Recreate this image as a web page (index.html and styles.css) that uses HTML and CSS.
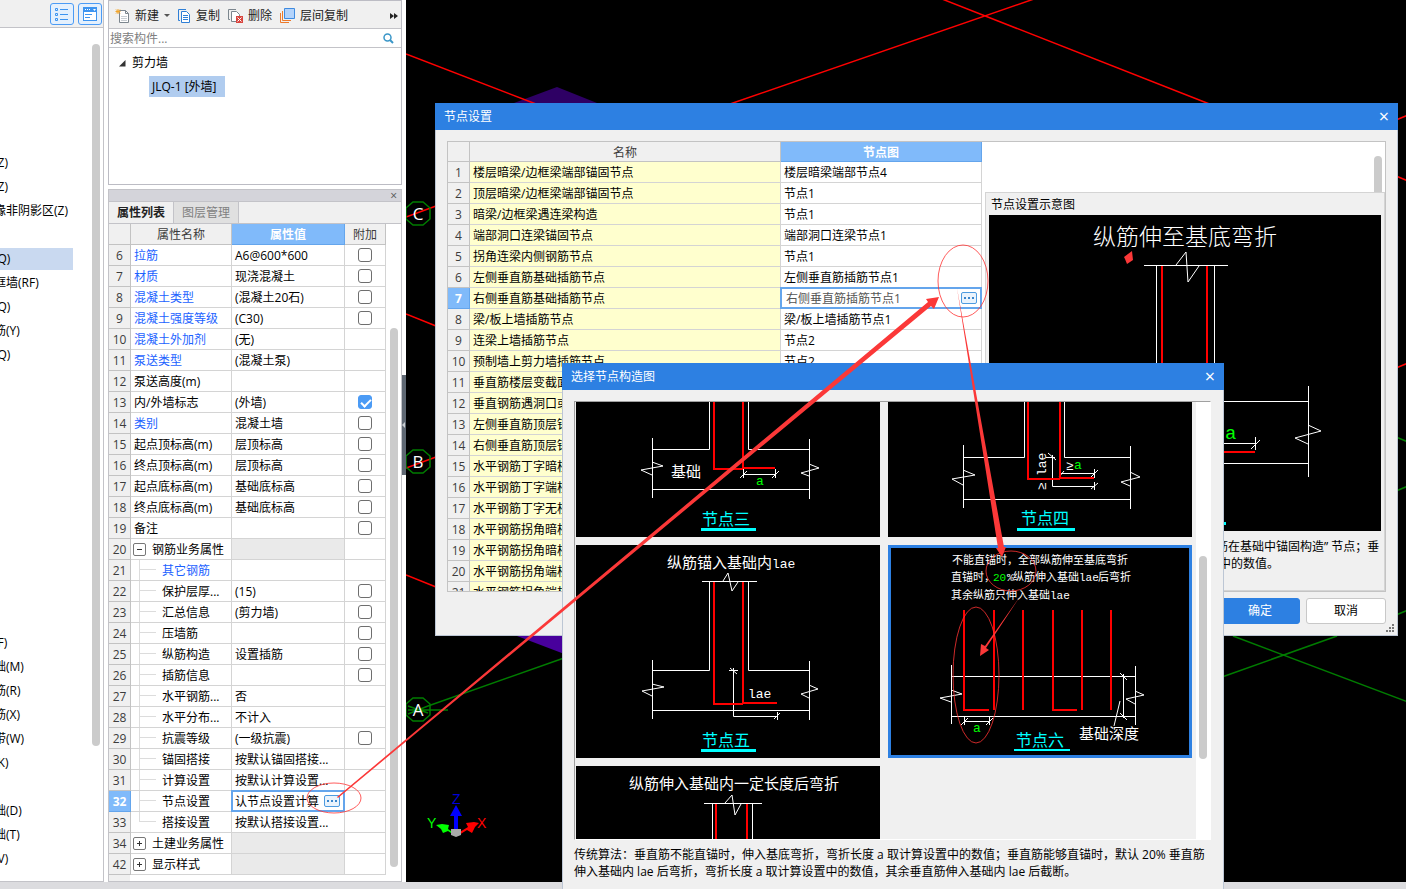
FILE: index.html
```html
<!DOCTYPE html>
<html lang="zh-CN">
<head>
  <meta charset="UTF-8">
  <meta name="viewport" content="width=device-width, initial-scale=1.0">
  <title>节点设置</title>
  <link rel="stylesheet" href="styles.css">
</head>
<body>

  <div class="workspace">

    <!-- Navigation tree -->
    <nav class="nav">
      <div class="nav-bar">
        <button class="view-btn" aria-label="列表">
          <svg width="14" height="14" viewBox="0 0 14 14" fill="none" stroke="#3d94f0">
            <path d="M.5 1.500h2v2h-2zM.5 6.500h2v2h-2zM.5 11.500h2v2h-2zM5 2.500h8M5 7.500h8M5 12.500h8"/>
          </svg>
        </button>
        <button class="view-btn" aria-label="窗口">
          <svg width="16" height="14" viewBox="0 0 16 14">
            <path d="M1 0h14v14H1z" fill="#3d94f0"/>
            <path d="M2 5h12v8H2zM3 2h1v1H3zM5 2h1v1H5zM7 2h1v1H7zM11 2h3l-1.500 2z" fill="#fff"/>
            <path d="M3 7.500h7M3 10.500h5" stroke="#3d94f0"/>
          </svg>
        </button>
      </div>
      <div class="nav-body">
        <ul class="nav-list">
          <li>构造柱(Z)</li>
          <li>砌体柱(Z)</li>
          <li>约束边缘非阴影区(Z)</li>
          <li></li>
          <li class="current">剪力墙(Q)</li>
          <li>人防门框墙(RF)</li>
          <li>砌体墙(Q)</li>
          <li>砌体加筋(Y)</li>
          <li>保温墙(Q)</li>
        </ul>
        <ul class="nav-list">
          <li>基础梁(F)</li>
          <li>筏板基础(M)</li>
          <li>筏板主筋(R)</li>
          <li>筏板负筋(X)</li>
          <li>基础板带(W)</li>
          <li>集水坑(K)</li>
          <li></li>
          <li>独立基础(D)</li>
          <li>条形基础(T)</li>
          <li>桩承台(V)</li>
        </ul>
        <div class="thumb nav-thumb"></div>
      </div>
    </nav>

    <!-- Component list and properties -->
    <aside class="side">
      <section class="components">
        <div class="toolbar">
          <button>
            <svg width="15" height="16" viewBox="0 0 15 16" fill="none">
              <path d="M4.500 2.500h6l3 3v9h-9z" fill="#fff" stroke="#7c868e"/>
              <path d="M10.500 2.500v3h3" stroke="#7c868e"/>
              <path d="M6 8.500h6M6 10.500h6M6 12.500h6" stroke="#c8cdd2"/>
              <path d="M3 1v5M.5 3.500h5M1 1.500l4 4M5 1.500l-4 4" stroke="#f2a52b"/>
            </svg>
            新建<i class="caret"></i>
          </button>
          <button>
            <svg width="13" height="16" viewBox="0 0 13 16" fill="none">
              <path d="M8 1.500H.5v11H2" stroke="#2f7fd6"/>
              <path d="M3.500 3.500h5l3 3v8h-8z" fill="#fff" stroke="#2f7fd6"/>
              <path d="M5 7.500h5M5 9.500h5M5 11.500h5" stroke="#2f7fd6"/>
            </svg>
            复制
          </button>
          <button>
            <svg width="15" height="16" viewBox="0 0 15 16" fill="none">
              <path d="M8 1.500H.5v10H2" stroke="#7c868e"/>
              <path d="M3.500 3.500h5l3 3v7h-8z" fill="#fff" stroke="#7c868e"/>
              <path d="M8 8h7v7H8z" fill="#d9453f"/>
              <path d="M9.500 9.500l4 4M13.500 9.500l-4 4" stroke="#fff"/>
            </svg>
            删除
          </button>
          <button>
            <svg width="15" height="16" viewBox="0 0 15 16" fill="none">
              <path d="M.5 5v9.500H9M2.500 3v9.500H11" stroke="#ec7a2c"/>
              <path d="M4.500.5h10v10h-10z" fill="#b3d3fb" stroke="#3f8be0"/>
            </svg>
            层间复制
          </button>
          <svg class="more" width="8" height="6" viewBox="0 0 8 6"><path d="M0 0l4 3-4 3zM4 0l4 3-4 3z" fill="#222"/></svg>
        </div>
        <div class="search">
          <input type="text" placeholder="搜索构件..." aria-label="搜索构件">
          <svg width="11" height="11" viewBox="0 0 11 11" fill="none" stroke="#3a96c8">
            <circle cx="4.500" cy="4.500" r="3.500" stroke-width="1.500"/>
            <path d="M7 7l3 3" stroke-width="2"/>
          </svg>
        </div>
        <div class="tree">
          <div class="tree-root"><svg width="7" height="7" viewBox="0 0 7 7"><path d="M6.500 0v6.500H0z" fill="#333"/></svg>剪力墙</div>
          <div class="tree-leaf">JLQ-1 [外墙]</div>
        </div>
      </section>

      <section class="props">
        <div class="props-strip"><button class="close-sm" aria-label="关闭">×</button></div>
        <div class="tabs">
          <button class="tab active">属性列表</button>
          <button class="tab">图层管理</button>
        </div>
        <div class="props-body">
          <table class="grid props-grid">
            <colgroup><col class="c-num"><col class="c-name"><col class="c-value"><col class="c-extra"></colgroup>
            <thead>
              <tr><th></th><th>属性名称</th><th class="active">属性值</th><th>附加</th></tr>
            </thead>
            <tbody>
              <tr><th>6</th><td class="link">拉筋</td><td>A6@600*600</td><td><input type="checkbox" aria-label="拉筋"></td></tr>
              <tr><th>7</th><td class="link">材质</td><td>现浇混凝土</td><td><input type="checkbox" aria-label="材质"></td></tr>
              <tr><th>8</th><td class="link">混凝土类型</td><td>(混凝土20石)</td><td><input type="checkbox" aria-label="混凝土类型"></td></tr>
              <tr><th>9</th><td class="link">混凝土强度等级</td><td>(C30)</td><td><input type="checkbox" aria-label="混凝土强度等级"></td></tr>
              <tr><th>10</th><td class="link">混凝土外加剂</td><td>(无)</td><td></td></tr>
              <tr><th>11</th><td class="link">泵送类型</td><td>(混凝土泵)</td><td></td></tr>
              <tr><th>12</th><td>泵送高度(m)</td><td></td><td></td></tr>
              <tr><th>13</th><td>内/外墙标志</td><td>(外墙)</td><td><input type="checkbox" aria-label="内/外墙标志" checked></td></tr>
              <tr><th>14</th><td class="link">类别</td><td>混凝土墙</td><td><input type="checkbox" aria-label="类别"></td></tr>
              <tr><th>15</th><td>起点顶标高(m)</td><td>层顶标高</td><td><input type="checkbox" aria-label="起点顶标高"></td></tr>
              <tr><th>16</th><td>终点顶标高(m)</td><td>层顶标高</td><td><input type="checkbox" aria-label="终点顶标高"></td></tr>
              <tr><th>17</th><td>起点底标高(m)</td><td>基础底标高</td><td><input type="checkbox" aria-label="起点底标高"></td></tr>
              <tr><th>18</th><td>终点底标高(m)</td><td>基础底标高</td><td><input type="checkbox" aria-label="终点底标高"></td></tr>
              <tr><th>19</th><td>备注</td><td></td><td><input type="checkbox" aria-label="备注"></td></tr>
              <tr><th>20</th><td><button class="fold" aria-label="收起"></button>钢筋业务属性</td><td class="off"></td><td></td></tr>
              <tr><th>21</th><td class="child link">其它钢筋</td><td></td><td></td></tr>
              <tr><th>22</th><td class="child">保护层厚...</td><td>(15)</td><td><input type="checkbox" aria-label="保护层厚度"></td></tr>
              <tr><th>23</th><td class="child">汇总信息</td><td>(剪力墙)</td><td><input type="checkbox" aria-label="汇总信息"></td></tr>
              <tr><th>24</th><td class="child">压墙筋</td><td></td><td><input type="checkbox" aria-label="压墙筋"></td></tr>
              <tr><th>25</th><td class="child">纵筋构造</td><td>设置插筋</td><td><input type="checkbox" aria-label="纵筋构造"></td></tr>
              <tr><th>26</th><td class="child">插筋信息</td><td></td><td><input type="checkbox" aria-label="插筋信息"></td></tr>
              <tr><th>27</th><td class="child">水平钢筋...</td><td>否</td><td></td></tr>
              <tr><th>28</th><td class="child">水平分布...</td><td>不计入</td><td></td></tr>
              <tr><th>29</th><td class="child">抗震等级</td><td>(一级抗震)</td><td><input type="checkbox" aria-label="抗震等级"></td></tr>
              <tr><th>30</th><td class="child">锚固搭接</td><td>按默认锚固搭接...</td><td></td></tr>
              <tr><th>31</th><td class="child">计算设置</td><td>按默认计算设置...</td><td></td></tr>
              <tr><th class="active">32</th><td class="child">节点设置</td><td class="edit"><div class="editor"><input type="text" value="认节点设置计算" aria-label="节点设置"><button class="dots" aria-label="更多"></button></div></td><td></td></tr>
              <tr><th>33</th><td class="child last">搭接设置</td><td>按默认搭接设置...</td><td></td></tr>
              <tr><th>34</th><td><button class="fold plus" aria-label="展开"></button>土建业务属性</td><td class="off"></td><td></td></tr>
              <tr><th>42</th><td><button class="fold plus" aria-label="展开"></button>显示样式</td><td class="off"></td><td></td></tr>
            </tbody>
          </table>
          <div class="thumb props-thumb"></div>
        </div>
      </section>
    </aside>

    <!-- Model view -->
    <main class="scene">
      <button class="splitter" aria-label="收起面板"></button>
      <svg class="scene-lines" width="100%" height="100%">
        <g transform="translate(-406 0)" fill="none" stroke-width="1.500">
          <path d="M514 103l43-16 40 16z" fill="#2e0064"/>
          <path d="M517 636l50 19v-19z" fill="#48009c"/>
          <g stroke="#f00">
            <path d="M406 54l130 50M730 104L1034-1M942-1l270 106M1396 120l12-5M1396 176l12 5M1396 368l12-5"/>
            <path d="M406 217l30-11M406 314l30 12M406 468l30-11M406 575l30 12"/>
          </g>
          <g stroke="#007c00">
            <path d="M1396 437l12 5M1396 491l12-5M1396 615l12-5M1233 636l175 66M1337 636l-115 41"/>
            <path d="M408 714l20-8 136-48M408 710h40M408 706l20 7"/>
            <path d="M413 202h10l7 6v11l-7 6h-10l-7-6v-11zM413 450h10l7 6v11l-7 6h-10l-7-6v-11zM413 698h10l7 6v11l-7 6h-10l-7-6v-11z"/>
          </g>
        </g>
        <g class="axis-name">
          <text x="12" y="220">C</text>
          <text x="12" y="468">B</text>
          <text x="12" y="716">A</text>
        </g>
        <g class="gizmo">
          <path d="M48 811h4v18h-4zM50 805l6 11H44z" fill="#00f"/>
          <path d="M52 833l10-6-2-4 8-1 5 1-4 4-3 6-5-3-8 5z" fill="#f00"/>
          <path d="M48 833l-6-4 1-4-7-1-6 1 5 4 2 4 5-2 6 4z" fill="#0f0"/>
          <path d="M45 829h10v6l-5 2-5-2z" fill="#aaa"/>
          <text x="46" y="804" fill="#0000d8">Z</text>
          <text x="21" y="828" fill="#0f0">Y</text>
          <text x="71" y="828" fill="#f00">X</text>
        </g>
      </svg>
    </main>
  </div>

  <footer class="status"></footer>

  <!-- Node settings dialog -->
  <div class="dialog node-dialog" role="dialog" aria-label="节点设置">
    <div class="dialog-title">节点设置<button class="close" aria-label="关闭">×</button></div>
    <div class="node-frame">
      <table class="grid node-grid">
        <colgroup><col class="c-num"><col class="c-node"><col class="c-figure"></colgroup>
        <thead>
          <tr><th></th><th>名称</th><th class="active">节点图</th></tr>
        </thead>
        <tbody>
          <tr><th>1</th><td>楼层暗梁/边框梁端部锚固节点</td><td>楼层暗梁端部节点4</td></tr>
          <tr><th>2</th><td>顶层暗梁/边框梁端部锚固节点</td><td>节点1</td></tr>
          <tr><th>3</th><td>暗梁/边框梁遇连梁构造</td><td>节点1</td></tr>
          <tr><th>4</th><td>端部洞口连梁锚固节点</td><td>端部洞口连梁节点1</td></tr>
          <tr><th>5</th><td>拐角连梁内侧钢筋节点</td><td>节点1</td></tr>
          <tr><th>6</th><td>左侧垂直筋基础插筋节点</td><td>左侧垂直筋插筋节点1</td></tr>
          <tr><th class="active">7</th><td>右侧垂直筋基础插筋节点</td><td class="edit"><div class="editor"><input type="text" value="右侧垂直筋插筋节点1" aria-label="节点图"><button class="dots" aria-label="更多"></button></div></td></tr>
          <tr><th>8</th><td>梁/板上墙插筋节点</td><td>梁/板上墙插筋节点1</td></tr>
          <tr><th>9</th><td>连梁上墙插筋节点</td><td>节点2</td></tr>
          <tr><th>10</th><td>预制墙上剪力墙插筋节点</td><td>节点2</td></tr>
          <tr><th>11</th><td>垂直筋楼层变截面锚固节点</td><td></td></tr>
          <tr><th>12</th><td>垂直钢筋遇洞口或端部节点</td><td></td></tr>
          <tr><th>13</th><td>左侧垂直筋顶层锚固节点</td><td></td></tr>
          <tr><th>14</th><td>右侧垂直筋顶层锚固节点</td><td></td></tr>
          <tr><th>15</th><td>水平钢筋丁字暗柱节点</td><td></td></tr>
          <tr><th>16</th><td>水平钢筋丁字端柱节点</td><td></td></tr>
          <tr><th>17</th><td>水平钢筋丁字无柱节点</td><td></td></tr>
          <tr><th>18</th><td>水平钢筋拐角暗柱外侧节点</td><td></td></tr>
          <tr><th>19</th><td>水平钢筋拐角暗柱内侧节点</td><td></td></tr>
          <tr><th>20</th><td>水平钢筋拐角端柱外侧节点</td><td></td></tr>
          <tr><th>21</th><td>水平钢筋拐角端柱内侧节点</td><td></td></tr>
        </tbody>
      </table>
      <div class="node-side">
        <div class="node-side-top"><div class="thumb"></div></div>
        <div class="preview">
          <div class="preview-title">节点设置示意图</div>
          <svg class="cad" viewBox="989 215 392 316">
            <text x="1093" y="245" class="t-xl">纵筋伸至基底弯折</text>
            <path class="w" d="M1144 265.500h84M1156.500 265v136M1214.500 265v136.500h94M1308.500 386v91M1156 463.500h152M1170 443.500h85.500M1255.500 437v13M1251 449l9-9"/>
            <path class="w" d="M1176 265l10-13 2 30 11-16M1308 425l13 6-26 7 13 6"/>
            <path class="r" d="M1162 266v186M1207 266v186h48"/>
            <text x="1225" y="439" class="t-lg g">a</text>
            <path class="u" d="M1170 523.500h56"/>
          </svg>
          <p class="preview-note">采用标准图集16G101-3中“墙身竖向分布钢筋在基础中锚固构造” 节点；垂<br>直筋伸至基底弯折，弯折长度 a 取计算设置中的数值。</p>
        </div>
      </div>
    </div>
    <div class="actions">
      <button class="btn primary">确定</button>
      <button class="btn">取消</button>
    </div>
    <svg class="grip" width="8" height="8" viewBox="0 0 8 8" fill="#777"><path d="M6 0h2v2H6zM3 3h2v2H3zM6 3h2v2H6zM0 6h2v2H0zM3 6h2v2H3zM6 6h2v2H6z"/></svg>
  </div>

  <!-- Node figure picker -->
  <div class="dialog pick-dialog" role="dialog" aria-label="选择节点构造图">
    <div class="dialog-title">选择节点构造图<button class="close" aria-label="关闭">×</button></div>
    <div class="gallery">
      <div class="cards">
        <svg class="cad" viewBox="576 402 304 135">
          <path class="w" d="M709.500 402v47.500h-57M748.500 402v47.500h61M652.500 438v60M809.500 439v60M652 489.500h157"/>
          <path class="w" d="M652 462l11 4-22 4 11 5M809 464l10 4-18 5 8 3M743 474.500h33M743.500 469v9M775.500 469v9M740 478l7-7M772 478l7-7"/>
          <path class="r" d="M714 402v67h29M743 402v66h32"/>
          <text x="671" y="477" class="t-md">基础</text>
          <text x="756" y="485" class="t-sm g">a</text>
          <text x="702" y="525" class="t-name">节点三</text>
          <path class="u" d="M701 529.500h55"/>
        </svg>
        <svg class="cad" viewBox="888 402 304 135">
          <path class="w" d="M1024.500 402v55.500h-61M1064.500 402v55.500h66M963.500 445v63M1130.500 446v63M963 499.500h167"/>
          <path class="w" d="M963 470l12 5-23 4 11 6M1130 472l10 5-19 5 9 4M1052.500 455v31.500h42M1046 457.500h9M1048 453l8 7M1060 473.500h34.500M1094.500 469v9M1094.500 482v8M1059 477l5-6M1091 477l7-7M1091 489l7-6"/>
          <path class="r" d="M1028 402v77h32M1060 402v76h34"/>
          <text transform="rotate(-90 1046 476)" x="1046" y="476" class="t-sm">lae</text>
          <text transform="rotate(-90 1046 490)" x="1046" y="490" class="t-sm">≥</text>
          <text x="1066" y="470" class="t-sm">≥<tspan x="1074" y="469" class="g">a</tspan></text>
          <text x="1021" y="524" class="t-name">节点四</text>
          <path class="u" d="M1017 529.500h58"/>
        </svg>
        <svg class="cad" viewBox="576 545 304 213">
          <text x="667" y="568" class="t-md">纵筋锚入基础内<tspan class="t-sm">lae</tspan></text>
          <path class="w" d="M702 581.500h55M709.500 582v88.500h-57M748.500 582v88.500h61M652.500 660v59M809.500 661v59M652 710.500h157"/>
          <path class="w" d="M723 581l5-8 4 18 6-9M652 684l12 3-22 4 10 5M809 685l9 4-17 5 8 4M733.500 668v48.500h44M729 670.500h9M730 668l7 6M777.500 712v8M774 719l6-6"/>
          <path class="r" d="M714 582v122h29M743 582v121h34"/>
          <text x="748" y="698" class="t-sm">lae</text>
          <text x="702" y="746" class="t-name">节点五</text>
          <path class="u" d="M701 750.500h55"/>
        </svg>
        <svg class="cad selected" viewBox="888 545 304 213">
          <g class="t-xs">
            <text x="952" y="564">不能直锚时，全部纵筋伸至基底弯折</text>
            <text x="951" y="581">直锚时，<tspan x="993" class="g">20</tspan><tspan x="1007">%</tspan><tspan x="1013">纵筋伸入基础</tspan><tspan x="1079">lae</tspan><tspan x="1098">后弯折</tspan></text>
            <text x="951" y="599">其余纵筋只伸入基础lae</text>
          </g>
          <path class="w" d="M951 676.500h184M951 716.500h184M951.500 665v59M1135.500 666v59M1123.500 674v44M1120 673l7 7M1120 713l7 7M1120 701l-6 25"/>
          <path class="w" d="M951 690l11 4-22 4 11 4M1135 691l9 4-18 4 9 5M964 721.500h25M964.500 717v8M989.500 717v8M961 725l7-7M986 725l7-7"/>
          <path class="r" d="M964 610v100h25M994 610v100M1023 610v100M1053 610v100h24M1082 610v100M1111 610v100"/>
          <text x="973" y="732" class="t-sm g">a</text>
          <text x="1079" y="739" class="t-md">基础深度</text>
          <text x="1016" y="746" class="t-name">节点六</text>
          <path class="u thin" d="M1014 750h56"/>
        </svg>
        <svg class="cad" viewBox="576 766 304 73">
          <text x="629" y="789" class="t-md">纵筋伸入基础内一定长度后弯折</text>
          <path class="w" d="M704 803.500h58M712.500 804v35M752.500 804v35M725 803l7-8 3 20 6-11"/>
          <path class="r" d="M716 804v35M747 804v35"/>
        </svg>
      </div>
      <div class="track"><div class="thumb"></div></div>
    </div>
    <p class="pick-note">传统算法：垂直筋不能直锚时，伸入基底弯折，弯折长度 a 取计算设置中的数值；垂直筋能够直锚时，默认 20% 垂直筋<br>伸入基础内 lae 后弯折，弯折长度 a 取计算设置中的数值，其余垂直筋伸入基础内 lae 后截断。</p>
  </div>

  <!-- Review marks drawn over the windows -->
  <svg class="marks" width="100%" height="100%">
    <g fill="none" stroke="#f33" stroke-opacity=".8">
      <ellipse cx="334" cy="798" rx="27" ry="15"/>
      <ellipse cx="963" cy="281" rx="25" ry="36"/>
      <ellipse cx="1011" cy="571" rx="25" ry="20"/>
      <ellipse cx="976" cy="675" rx="23" ry="68"/>
    </g>
    <g fill="#fb3838">
      <path d="M337 797L928 302l-2-3 13-2-5 12-3-3L338 798z"/>
      <path d="M957 288l41 260-2 0 6 9 4-10-2 0z"/>
      <path d="M1021 595l-36 51-4-2-1 12 9-6-3-2z"/>
      <path d="M1124 257l8-6 1 9-3 2-3 2-2-5z"/>
    </g>
  </svg>

</body>
</html>
```
FILE: styles.css
```css
* {
  margin: 0;
  padding: 0;
  box-sizing: border-box;
}

body {
  height: 100vh;
  display: flex;
  flex-direction: column;
  position: relative;
  overflow: hidden;
  background: #fff;
  color: #000;
  font-family: "Open Sans", "Noto Sans CJK SC", sans-serif;
  font-size: 12px;
  line-height: 20px;
}

button, input {
  font: inherit;
  color: inherit;
  border: none;
  background: none;
  outline: none;
}

ul {
  list-style: none;
}

.workspace {
  flex: 1;
  min-height: 0;
  display: flex;
  gap: 4px;
}

.status {
  height: 7px;
  background: #dcdcdf;
}

.thumb {
  width: 8px;
  border-radius: 4px;
  background: #cbcbcb;
}

/* navigation */
.nav {
  width: 104px;
  display: flex;
  flex-direction: column;
  border-right: 1px solid #c3c3c8;
  border-bottom: 1px solid #c3c3c8;
}

.nav-bar {
  height: 28px;
  display: flex;
  justify-content: flex-end;
  align-items: center;
  gap: 4px;
  padding-right: 1px;
  background: #f0f0f0;
  border-bottom: 1px solid #c3c3c8;
}

.view-btn {
  width: 24px;
  height: 22px;
  display: flex;
  align-items: center;
  justify-content: center;
  border: 1px solid #4b9bf5;
  border-radius: 3px;
  background: #e4f0fd;
}

.nav-body {
  flex: 1;
  min-height: 0;
  position: relative;
  display: flex;
  flex-direction: column;
  gap: 264px;
  padding-top: 123px;
  overflow: hidden;
}

.nav-list li {
  width: 73px;
  height: 24px;
  line-height: 24px;
  text-indent: -42px;
  white-space: nowrap;
}

.nav-list .current {
  background: #c9d9f0;
  background-clip: content-box;
  padding: 1px 0;
  line-height: 22px;
}

.nav-thumb {
  position: absolute;
  top: 16px;
  right: 3px;
  bottom: 135px;
}

/* component panel */
.side {
  width: 294px;
  display: flex;
  flex-direction: column;
  gap: 4px;
}

.components {
  height: 185px;
  display: flex;
  flex-direction: column;
  border: 1px solid #bcbcc4;
}

.toolbar {
  height: 28px;
  display: flex;
  align-items: center;
  gap: 8px;
  padding: 2px 3px 0 6px;
  background: #f0f0f0;
  border-bottom: 1px solid #c3c3c8;
  color: #222;
}

.toolbar button {
  display: flex;
  align-items: center;
  gap: 5px;
}

.caret {
  border: 3px solid transparent;
  border-top-color: #555;
  border-bottom: none;
}

.more {
  margin-left: auto;
}

.search {
  height: 19px;
  display: flex;
  align-items: center;
  padding: 0 7px 0 1px;
  border-bottom: 1px solid #c3c3c8;
}

.search input {
  flex: 1;
  height: 18px;
  padding-top: 2px;
}

.search input::placeholder {
  color: #808080;
}

.tree {
  flex: 1;
  padding: 3px 0 0 10px;
  line-height: 24px;
}

.tree-root {
  display: flex;
  align-items: center;
  gap: 6px;
}

.tree-leaf {
  width: 76px;
  margin: 1px 0 0 30px;
  padding-left: 3px;
  line-height: 21px;
  white-space: nowrap;
  background: #b0ccef;
}

/* properties */
.props {
  flex: 1;
  min-height: 0;
  display: flex;
  flex-direction: column;
  border: 1px solid #c3c3c8;
}

.props-strip {
  height: 12px;
  display: flex;
  justify-content: flex-end;
  padding-right: 4px;
  background: #d4d4da;
  border-bottom: 1px solid #c3c3c8;
}

.close-sm {
  line-height: 11px;
  color: #555;
}

.tabs {
  height: 22px;
  display: flex;
  background: #f0f0f0;
  border-bottom: 1px solid #c3c3c8;
}

.tab {
  width: 65px;
  border-right: 1px solid #c3c3c8;
  background: #e0e0e0;
  color: #808080;
  line-height: 20px;
}

.tab.active {
  background: #f0f0f0;
  color: #222;
  font-weight: bold;
}

.props-body {
  flex: 1;
  min-height: 0;
  position: relative;
  background: linear-gradient(to right, #f0f0f0 21px, #fff 21px);
}

.props-thumb {
  position: absolute;
  top: 104px;
  right: 3px;
  bottom: 14px;
}

/* tables */
.grid {
  table-layout: fixed;
  border-collapse: separate;
  border-spacing: 0;
}

.grid th, .grid td {
  height: 21px;
  padding-top: 2px;
  border-right: 1px solid #d4d4d4;
  border-bottom: 1px solid #d4d4d4;
  line-height: 18px;
  white-space: nowrap;
  overflow: hidden;
}

.grid th {
  background: #f0f0f0;
  border-color: #c3c3c3;
  font-weight: normal;
  color: #3c3c3c;
  text-align: center;
}

.grid th.active {
  background: #80bafa;
  border-color: #64a5ec;
  color: #fff;
  font-weight: bold;
}

.grid td {
  padding-left: 3px;
  background: #fff;
}

.grid .link {
  color: #1c62ff;
}

.grid .off {
  background: #eaeaea;
}

.props-grid {
  width: 277px;
}

.c-num { width: 22px; }
.c-name { width: 101px; }
.c-value { width: 113px; }
.c-extra { width: 41px; }
.c-node { width: 311px; }
.c-figure { width: 201px; }

.props-grid td:last-child {
  padding: 0;
  text-align: center;
  line-height: 0;
}

.props-grid input[type="checkbox"] {
  appearance: none;
  width: 14px;
  height: 14px;
  border: 1px solid #6e6e6e;
  border-radius: 3px;
  vertical-align: middle;
}

.props-grid input[type="checkbox"]:checked {
  border-color: #4b9bf5;
  background: #4b9bf5;
}

.props-grid input[type="checkbox"]:checked::after {
  content: "";
  display: block;
  width: 8px;
  height: 4px;
  margin: 3px 2px;
  border: solid #fff;
  border-width: 0 0 2px 2px;
  transform: rotate(-45deg);
}

.fold {
  position: relative;
  width: 13px;
  height: 13px;
  margin: 0 6px 0 -1px;
  border: 1px solid #777;
  border-radius: 2px;
  vertical-align: -1px;
}

.fold::before, .fold.plus::after {
  content: "";
  position: absolute;
  top: 5px;
  left: 3px;
  width: 5px;
  height: 1px;
  background: #333;
}

.fold.plus::after {
  transform: rotate(90deg);
}

.grid td.child {
  position: relative;
  padding-left: 31px;
}

.child::before, .child::after {
  content: "";
  position: absolute;
  left: 8px;
  background: #dcdcdc;
}

.child::before {
  top: 0;
  bottom: 0;
  width: 1px;
}

.child.last::before {
  bottom: 10px;
}

.child::after {
  top: 9px;
  width: 17px;
  height: 1px;
}

.grid td.edit {
  position: relative;
  padding: 0;
  overflow: visible;
}

.editor {
  position: absolute;
  inset: -1px;
  display: flex;
  align-items: center;
  border: 2px solid #64a5ec;
  padding: 0 3px 0 2px;
  background: #fff;
}

.editor input {
  flex: 1;
  min-width: 0;
  height: 18px;
  padding-top: 2px;
}

.node-grid .editor {
  padding-left: 4px;
  color: #555;
}

.dots {
  width: 16px;
  height: 12px;
  border: 1px solid #4d9be0;
  border-radius: 2px;
  background: radial-gradient(circle, #3a86cc 1px, transparent 1px) 1px 3px / 4px 4px repeat-x #eaf3fc;
}

/* model view */
.scene {
  flex: 1;
  position: relative;
  background: #000;
}

.scene-lines {
  display: block;
}

.axis-name, .gizmo {
  font-size: 17px;
}

.axis-name {
  fill: #fff;
  text-anchor: middle;
}

.gizmo {
  font-family: "Liberation Sans", sans-serif;
  font-size: 14px;
}

.splitter {
  position: absolute;
  top: 375px;
  left: -4px;
  width: 4px;
  height: 100px;
  background: #5f6873;
}

.splitter::before {
  content: "";
  position: absolute;
  top: 47px;
  left: 0;
  border: 3px solid transparent;
  border-right-color: #c8ccd0;
  border-left: none;
}

/* dialogs */
.dialog {
  position: absolute;
  background: #f0f0f0;
  border: 1px solid #bcc6d4;
  border-top: none;
}

.dialog-title {
  height: 27px;
  display: flex;
  justify-content: space-between;
  align-items: center;
  margin: 0 -1px;
  padding: 0 9px;
  background: #2d80e2;
  color: #fff;
}

.close {
  font-size: 18px;
  line-height: 18px;
  padding-bottom: 2px;
}

.node-dialog {
  top: 103px;
  left: 435px;
  width: 963px;
}

.node-frame {
  height: 451px;
  display: flex;
  margin: 11px 11px 0;
  border: 1px solid #c3c3c3;
  background: #fff;
  overflow: hidden;
}

.node-grid {
  width: 534px;
  align-self: flex-start;
}

.node-grid thead th {
  height: 20px;
  line-height: 17px;
}

.node-grid td:nth-child(2) {
  background: #ffffce;
}

.node-side {
  flex: 1;
  min-width: 0;
  display: flex;
  flex-direction: column;
  padding-left: 3px;
}

.node-side-top {
  height: 50px;
  display: flex;
  justify-content: flex-end;
  padding: 14px 3px 0 0;
}

.node-side-top .thumb {
  border-radius: 4px 4px 0 0;
}

.preview {
  flex: 1;
  padding: 2px 3px;
  background: #f0f0f0;
  border: 1px solid #d4d4d4;
}

.preview-title {
  padding-left: 2px;
}

.preview-note {
  padding: 7px 0 0 1px;
  line-height: 17px;
  white-space: nowrap;
}

.actions {
  display: flex;
  justify-content: flex-end;
  gap: 6px;
  padding: 6px 11px 11px;
}

.btn {
  width: 80px;
  height: 26px;
  border: 1px solid #c8c8c8;
  border-radius: 3px;
  background: #fff;
}

.btn.primary {
  border-color: #2d80e2;
  background: #2d80e2;
  color: #fff;
}

.grip {
  position: absolute;
  right: 3px;
  bottom: 3px;
}

.pick-dialog {
  top: 363px;
  left: 562px;
  bottom: 0;
  width: 662px;
  border-bottom: none;
}

.gallery {
  height: 439px;
  display: flex;
  justify-content: space-between;
  margin: 11px 12px 0 11px;
  border: 1px solid #fff;
  border-top-color: #a0a0a0;
  border-left-color: #a0a0a0;
}

.cards {
  display: grid;
  grid-template-columns: 304px 304px;
  grid-template-rows: 135px 213px 73px;
  gap: 8px;
  padding-left: 1px;
}

.track {
  width: 14px;
  padding: 154px 3px 0;
  background: #fff;
}

.track .thumb {
  height: 203px;
}

.pick-note {
  padding: 6px 0 0 11px;
  line-height: 17px;
  white-space: nowrap;
}

/* drawings */
.cad {
  display: block;
  width: 100%;
  background: #000;
  font-family: "Liberation Mono", "Noto Sans CJK SC", monospace;
  fill: #fff;
}

.cad.selected {
  outline: 3px solid #2d80e2;
  outline-offset: -3px;
}

.cad path {
  fill: none;
}

.cad .w { stroke: #fff; }
.cad .r { stroke: #f00; stroke-width: 2px; }
.cad .u { stroke: #0ff; stroke-width: 3px; }
.cad .u.thin { stroke-width: 2px; }
.cad .g { fill: #0f0; }

.t-xs { font-size: 11px; }
.t-sm { font-size: 13px; }
.t-md { font-size: 15px; }
.t-lg { font-size: 19px; }
.t-xl { font-size: 23px; font-weight: 300; }
.t-name { font-size: 16px; fill: #0ff; }

.marks {
  position: absolute;
  inset: 0;
  pointer-events: none;
}
```
